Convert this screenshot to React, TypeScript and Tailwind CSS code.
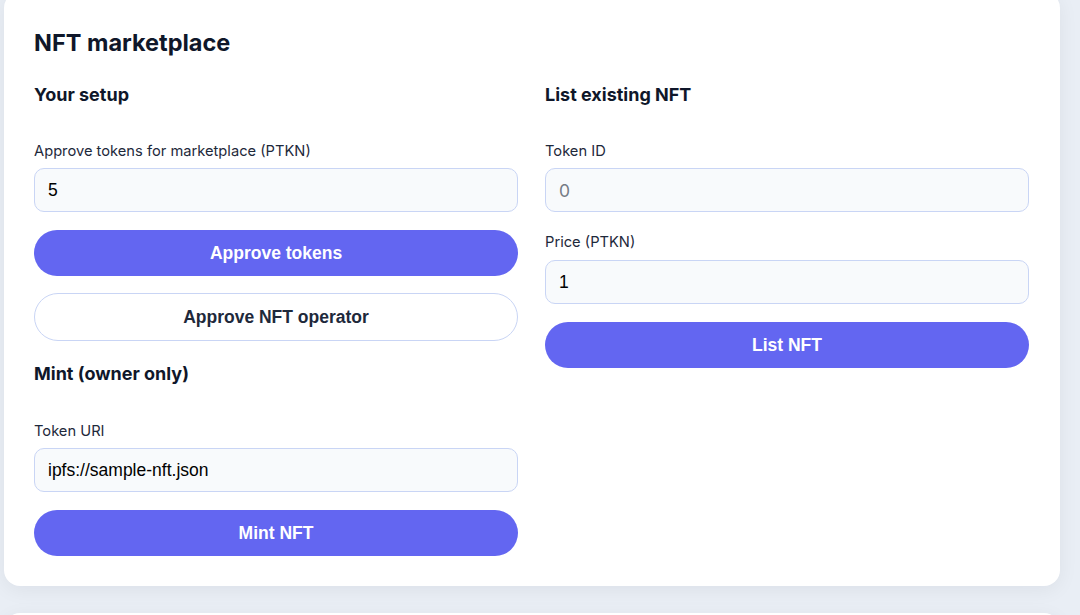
import React from 'react';

const heading = 'text-[18px] leading-[28px] font-bold text-[#0f172a]';
const label = 'block text-[14.7px] leading-[22px] text-[#1e293b]';
const input =
    'block w-full h-[44px] rounded-[10px] border border-[#c9d5f5] bg-[#f8fafc] px-[13px] text-[17.5px] text-black placeholder:text-[#757b85] outline-none';
const primary =
    'block w-full h-[46px] rounded-full bg-[#6366f1] text-white text-[17.5px] font-bold';
const secondary =
    'block w-full h-[48px] rounded-full border border-[#c9d5f5] bg-white text-[#1e293b] text-[17.5px] font-bold';

const arial = { fontFamily: '"Liberation Sans", Arial, sans-serif' };

const App = () => {
    return (
        <div className="min-h-screen bg-[#e9eef5] pl-[4px] overflow-hidden" style={{ fontFamily: 'Inter, "Noto Sans", sans-serif' }}>
            <div className="w-[1056px] -mt-[8px] rounded-2xl bg-white pl-[30px] pr-[31px] pt-[35px] pb-[30px] shadow-[0_4px_20px_rgba(15,23,42,0.06)]">
                <h1 className="text-[23.5px] leading-[32px] font-bold text-[#0f172a] mb-[22px]">NFT marketplace</h1>

                <div className="grid grid-cols-2 gap-x-[27px]">
                    {/* Left column */}
                    <div className="flex flex-col">
                        <h2 className={heading}>Your setup</h2>
                        <label className={`${label} mt-[31px] mb-[6px]`}>Approve tokens for marketplace (PTKN)</label>
                        <input className={input} style={arial} defaultValue="5" />
                        <button className={`${primary} mt-[18px]`} style={arial}>
                            Approve tokens
                        </button>
                        <button className={`${secondary} mt-[17px]`} style={arial}>
                            Approve NFT operator
                        </button>

                        <h2 className={`${heading} mt-[19px]`}>Mint (owner only)</h2>
                        <label className={`${label} mt-[32px] mb-[6px]`}>Token URI</label>
                        <input className={input} style={arial} defaultValue="ipfs://sample-nft.json" />
                        <button className={`${primary} mt-[18px]`} style={arial}>
                            Mint NFT
                        </button>
                    </div>

                    {/* Right column */}
                    <div className="flex flex-col">
                        <h2 className={heading}>List existing NFT</h2>
                        <label className={`${label} mt-[31px] mb-[6px]`}>Token ID</label>
                        <input className={`${input} text-[16px]`} placeholder="0" />
                        <label className={`${label} mt-[19px] mb-[7px]`}>Price (PTKN)</label>
                        <input className={input} style={arial} defaultValue="1" />
                        <button className={`${primary} mt-[18px]`} style={arial}>
                            List NFT
                        </button>
                    </div>
                </div>
            </div>

            <div className="w-[1056px] mt-[27px] h-[200px] rounded-2xl bg-white shadow-[0_4px_20px_rgba(15,23,42,0.06)]" />
        </div>
    );
};

export default App;
